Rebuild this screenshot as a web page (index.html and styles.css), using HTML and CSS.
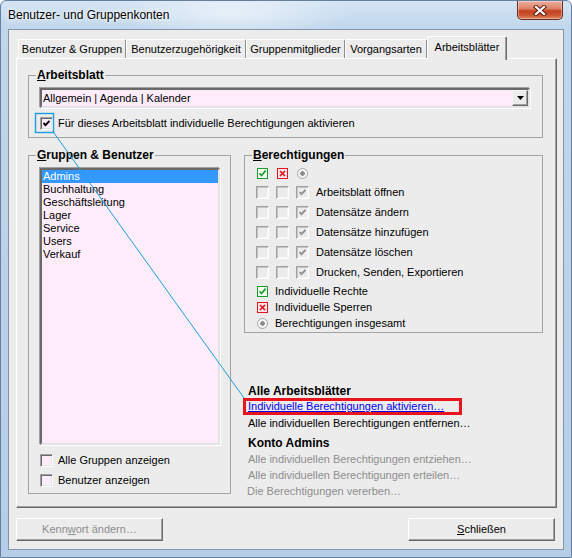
FILE: index.html
```html
<!DOCTYPE html>
<html lang="de">
<head>
    <meta charset="UTF-8">
    <meta name="viewport" content="width=device-width, initial-scale=1.0">
    <title>Benutzer- und Gruppenkonten</title>
    <link rel="stylesheet" href="styles.css">
</head>
<body>
<div class="window">
    <div class="titlebar">
        <div class="caption">Benutzer- und Gruppenkonten</div>
        <div class="closebtn">
            <svg width="14" height="11" viewBox="0 0 14 11">
                <path d="M3 2 L11 9 M11 2 L3 9" stroke="#5a2317" stroke-width="4.2" stroke-linecap="square"/>
                <path d="M3 2 L11 9 M11 2 L3 9" stroke="#fff" stroke-width="2.2" stroke-linecap="square"/>
            </svg>
        </div>
    </div>

    <div class="client">
        <div class="tabs">
            <div class="tab t1">Benutzer &amp; Gruppen</div>
            <div class="tab t2">Benutzerzugehörigkeit</div>
            <div class="tab t3">Gruppenmitglieder</div>
            <div class="tab t4">Vorgangsarten</div>
            <div class="tab t5 active">Arbeitsblätter</div>
        </div>

        <div class="pane">
            <fieldset class="group sheetgroup">
                <legend><u>A</u>rbeitsblatt</legend>
                <div class="combo">
                    <span class="combotext">Allgemein | Agenda | Kalender</span>
                    <span class="dropbtn">
                        <svg width="7" height="4" viewBox="0 0 7 4"><path d="M0 0 H7 L3.5 4 Z" fill="#000"/></svg>
                    </span>
                </div>
                <div class="check">
                    <span class="box pink">
                        <svg width="9" height="9" viewBox="0 0 9 9"><polyline points="1.5,4 3.5,6.2 7.5,1.8" fill="none" stroke="#000" stroke-width="1.9"/></svg>
                    </span>
                    Für dieses Arbeitsblatt individuelle Berechtigungen aktivieren
                </div>
            </fieldset>

            <div class="columns">
                <fieldset class="group users">
                    <legend><u>G</u>ruppen &amp; Benutzer</legend>
                    <div class="listbox">
                        <div class="item selected">Admins</div>
                        <div class="item">Buchhaltung</div>
                        <div class="item">Geschäftsleitung</div>
                        <div class="item">Lager</div>
                        <div class="item">Service</div>
                        <div class="item">Users</div>
                        <div class="item">Verkauf</div>
                    </div>
                    <div class="check first"><span class="box pink"></span>Alle Gruppen anzeigen</div>
                    <div class="check"><span class="box pink"></span>Benutzer anzeigen</div>
                </fieldset>

                <div class="rightcol">
                    <fieldset class="group perms">
                        <legend><u>B</u>erechtigungen</legend>
                        <div class="permhead">
                            <span class="cell"><span class="ico ok"><svg width="9" height="9" viewBox="0 0 9 9"><polyline points="1.5,4.2 3.5,6.5 7.6,1.6" fill="none" stroke="#1b9b2c" stroke-width="1.7"/></svg></span></span>
                            <span class="cell"><span class="ico no"><svg width="9" height="9" viewBox="0 0 9 9"><path d="M2 2 L7 7 M7 2 L2 7" stroke="#e3141f" stroke-width="1.7"/></svg></span></span>
                            <span class="cell"><span class="ico dot"></span></span>
                        </div>
                        <div class="permrow">
                            <span class="cell"><span class="cb"></span></span>
                            <span class="cell"><span class="cb"></span></span>
                            <span class="cell"><span class="cb"><svg width="9" height="9" viewBox="0 0 9 9"><polyline points="1.5,4 3.5,6.2 7.5,1.8" fill="none" stroke="#8e8e8e" stroke-width="1.8"/></svg></span></span>
                            <span class="label">Arbeitsblatt öffnen</span>
                        </div>
                        <div class="permrow">
                            <span class="cell"><span class="cb"></span></span>
                            <span class="cell"><span class="cb"></span></span>
                            <span class="cell"><span class="cb"><svg width="9" height="9" viewBox="0 0 9 9"><polyline points="1.5,4 3.5,6.2 7.5,1.8" fill="none" stroke="#8e8e8e" stroke-width="1.8"/></svg></span></span>
                            <span class="label">Datensätze ändern</span>
                        </div>
                        <div class="permrow">
                            <span class="cell"><span class="cb"></span></span>
                            <span class="cell"><span class="cb"></span></span>
                            <span class="cell"><span class="cb"><svg width="9" height="9" viewBox="0 0 9 9"><polyline points="1.5,4 3.5,6.2 7.5,1.8" fill="none" stroke="#8e8e8e" stroke-width="1.8"/></svg></span></span>
                            <span class="label">Datensätze hinzufügen</span>
                        </div>
                        <div class="permrow">
                            <span class="cell"><span class="cb"></span></span>
                            <span class="cell"><span class="cb"></span></span>
                            <span class="cell"><span class="cb"><svg width="9" height="9" viewBox="0 0 9 9"><polyline points="1.5,4 3.5,6.2 7.5,1.8" fill="none" stroke="#8e8e8e" stroke-width="1.8"/></svg></span></span>
                            <span class="label">Datensätze löschen</span>
                        </div>
                        <div class="permrow">
                            <span class="cell"><span class="cb"></span></span>
                            <span class="cell"><span class="cb"></span></span>
                            <span class="cell"><span class="cb"><svg width="9" height="9" viewBox="0 0 9 9"><polyline points="1.5,4 3.5,6.2 7.5,1.8" fill="none" stroke="#8e8e8e" stroke-width="1.8"/></svg></span></span>
                            <span class="label">Drucken, Senden, Exportieren</span>
                        </div>
                        <div class="keys">
                            <div class="keyrow"><span class="ico ok"><svg width="9" height="9" viewBox="0 0 9 9"><polyline points="1.5,4.2 3.5,6.5 7.6,1.6" fill="none" stroke="#1b9b2c" stroke-width="1.7"/></svg></span>Individuelle Rechte</div>
                            <div class="keyrow"><span class="ico no"><svg width="9" height="9" viewBox="0 0 9 9"><path d="M2 2 L7 7 M7 2 L2 7" stroke="#e3141f" stroke-width="1.7"/></svg></span>Individuelle Sperren</div>
                            <div class="keyrow"><span class="ico dot"></span>Berechtigungen insgesamt</div>
                        </div>
                    </fieldset>

                    <div class="actions">
                        <div class="heading">Alle Arbeitsblätter</div>
                        <div class="link marked">Individuelle Berechtigungen aktivieren…</div>
                        <div class="action">Alle individuellen Berechtigungen entfernen…</div>
                        <div class="heading second">Konto Admins</div>
                        <div class="action disabled">Alle individuellen Berechtigungen entziehen…</div>
                        <div class="action disabled">Alle individuellen Berechtigungen erteilen…</div>
                        <div class="action disabled inherit">Die Berechtigungen vererben…</div>
                    </div>
                </div>
            </div>
        </div>

        <div class="buttons">
            <div class="btn disabled">Kenn<u>w</u>ort ändern…</div>
            <div class="btn"><u>S</u>chließen</div>
        </div>
    </div>

    <!-- callout from the checkbox to the marked link -->
    <svg class="callout" width="572" height="558" viewBox="0 0 572 558">
        <rect x="35.5" y="113.5" width="18" height="19" fill="none" stroke="#1c9de0" stroke-width="1.4"/>
        <line x1="54" y1="133" x2="244" y2="398" stroke="#1c9de0" stroke-width="1"/>
    </svg>
</div>
</body>
</html>
```

FILE: styles.css
```css
* {
    box-sizing: border-box;
}

body {
    margin: 0;
    background: #ffffff;
    font-family: "Liberation Sans", Arial, sans-serif;
    font-size: 11px;
    color: #000000;
}

.window {
    position: relative;
    width: 572px;
    height: 558px;
    padding: 0 7px 7px 7px;
    border: 1px solid #63809f;
    border-radius: 6px 6px 0 0;
    background:
        radial-gradient(ellipse 120px 30px at 230px 12px, rgba(255,255,255,0.55), rgba(255,255,255,0) 100%),
        linear-gradient(180deg, #d4e4f4 0, #c0d6ec 28px, #b5cde6 100%);
}

.titlebar {
    height: 28px;
    display: flex;
    align-items: center;
    justify-content: space-between;
}

.caption {
    font-size: 12px;
    text-shadow: 0 0 6px #ffffff, 0 0 3px #ffffff;
}

.closebtn {
    align-self: flex-start;
    width: 46px;
    height: 19px;
    margin-right: 1px;
    border: 1px solid #6d2c1f;
    border-top: none;
    border-radius: 0 0 5px 5px;
    background: linear-gradient(180deg, #eab0a0 0, #de8068 42%, #c6421f 55%, #cc5330 78%, #e08b66 100%);
    box-shadow: inset 0 0 0 1px rgba(255,255,255,0.35);
    display: flex;
    align-items: center;
    justify-content: center;
}

.client {
    width: 556px;
    height: 521px;
    border: 1px solid #8496ab;
    background: #ececec;
    padding: 6px 6px 0 7px;
}

/* tabs */
.tabs {
    display: flex;
    align-items: flex-end;
    height: 22px;
    margin-left: 2px;
    position: relative;
    z-index: 1;
}

.tab {
    height: 19px;
    line-height: 18px;
    text-align: center;
    border: 1px solid;
    border-color: #ffffff #8c8c8c transparent #ffffff;
    border-bottom: none;
    border-radius: 2px 2px 0 0;
    background: #ececec;
    white-space: nowrap;
}

.t1 { width: 108px; }
.t2 { width: 120px; }
.t3 { width: 99px; }
.t4 { width: 82px; }
.t5 { width: 80px; }

.tab.active {
    height: 24px;
    line-height: 21px;
    margin-bottom: -2px;
    border-right: 1px solid #696969;
    box-shadow: inset -1px 0 0 #a0a0a0;
}

.pane {
    height: 450px;
    border: 1px solid;
    border-color: #ffffff #696969 #696969 #ffffff;
    box-shadow: inset -1px -1px 0 #a0a0a0;
    padding: 0 0 0 11px;
}

/* group boxes */
.group {
    margin: 0;
    min-width: 0;
    padding: 6px 12px 4px 11px;
    border: 1px solid #a3a3a3;
}

.group legend {
    font-weight: bold;
    font-size: 12px;
    line-height: 14px;
    padding: 0 1px;
    margin-left: -4px;
}

.sheetgroup {
    width: 515px;
    margin-top: 9px;
}

.combo {
    display: flex;
    align-items: center;
    justify-content: space-between;
    height: 20px;
    border: 2px solid;
    border-color: #696969 #e3e3e3 #e3e3e3 #696969;
    box-shadow: -1px -1px 0 #a0a0a0, 1px 1px 0 #ffffff;
    background: #fdedfb;
    padding-left: 1px;
}

.dropbtn {
    width: 16px;
    height: 16px;
    display: flex;
    align-items: center;
    justify-content: center;
    border: 1px solid;
    border-color: #f5f5f5 #696969 #696969 #f5f5f5;
    box-shadow: inset -1px -1px 0 #a0a0a0;
    background: #ececec;
}

.check {
    display: flex;
    align-items: center;
    height: 20px;
    margin-top: 5px;
}

.box {
    width: 13px;
    height: 13px;
    margin-right: 5px;
    display: flex;
    align-items: center;
    justify-content: center;
    border: 1px solid;
    border-color: #a0a0a0 #ffffff #ffffff #a0a0a0;
    box-shadow: inset 1px 1px 0 #696969, inset -1px -1px 0 #e3e3e3;
}

.box.pink {
    background: #fdedfb;
}

.columns {
    display: flex;
    align-items: flex-start;
    gap: 13px;
    margin-top: 10px;
}

.users {
    width: 203px;
    padding-bottom: 3px;
}

.listbox {
    width: 180px;
    height: 277px;
    border: 2px solid;
    border-color: #696969 #e3e3e3 #e3e3e3 #696969;
    box-shadow: -1px -1px 0 #a0a0a0, 1px 1px 0 #ffffff;
    background: #fdedfb;
}

.item {
    height: 13px;
    line-height: 13px;
    padding-left: 1px;
}

.item.selected {
    background: #3399ff;
    color: #ffffff;
}

.users .check {
    margin-top: 0;
}

.users .check.first {
    margin-top: 5px;
}

.rightcol {
    width: 299px;
}

.perms {
    padding: 2px 0 1px 11px;
}

.permhead {
    display: flex;
    align-items: center;
    height: 18px;
}

.permrow {
    display: flex;
    align-items: center;
    height: 20px;
}

.cell {
    width: 20px;
    display: flex;
}

.cb {
    width: 13px;
    height: 13px;
    display: flex;
    align-items: center;
    justify-content: center;
    border: 1px solid;
    border-color: #a0a0a0 #ffffff #ffffff #a0a0a0;
    box-shadow: inset 1px 1px 0 #c4c4c4, inset -1px -1px 0 #f4f4f4;
}

.ico {
    width: 11px;
    height: 11px;
    margin-left: 1px;
    display: flex;
    align-items: center;
    justify-content: center;
}

.ico.ok {
    border: 1px solid #1b9b2c;
    background: #f4fff4;
}

.ico.no {
    border: 1px solid #e3141f;
    background: #ffe6ea;
}

.ico.dot {
    border: 1px solid #a5a5a5;
    border-radius: 50%;
    background: radial-gradient(circle, #8a8a8a 0, #8a8a8a 2px, #f6f6f6 2.5px);
}

.keys {
    margin-top: 1px;
}

.keyrow {
    display: flex;
    align-items: center;
    height: 16px;
}

.keyrow .ico {
    margin-right: 7px;
}

/* actions below the permissions */
.actions {
    margin-top: 50px;
    padding-left: 4px;
}

.heading {
    font-weight: bold;
    font-size: 12px;
    height: 16px;
    line-height: 16px;
}

.heading.second {
    margin-top: 4px;
}

.action {
    height: 16px;
    line-height: 16px;
}

.link {
    color: #0000ee;
    text-decoration: underline;
}

.link.marked {
    width: 219px;
    height: 17px;
    line-height: 11px;
    margin: -1px 0 0 -5px;
    padding-left: 2px;
    border: 3px solid #e8151c;
}

.disabled {
    color: #8d8d8d;
}

.inherit {
    margin-left: -1px;
}

/* dialog buttons */
.buttons {
    display: flex;
    justify-content: space-between;
    margin-top: 10px;
    padding-right: 2px;
}

.btn {
    width: 147px;
    height: 23px;
    line-height: 21px;
    text-align: center;
    border: 1px solid;
    border-color: #ffffff #696969 #696969 #ffffff;
    box-shadow: inset -1px -1px 0 #a0a0a0;
}

.callout {
    position: absolute;
    left: -1px;
    top: -1px;
    pointer-events: none;
}
```
